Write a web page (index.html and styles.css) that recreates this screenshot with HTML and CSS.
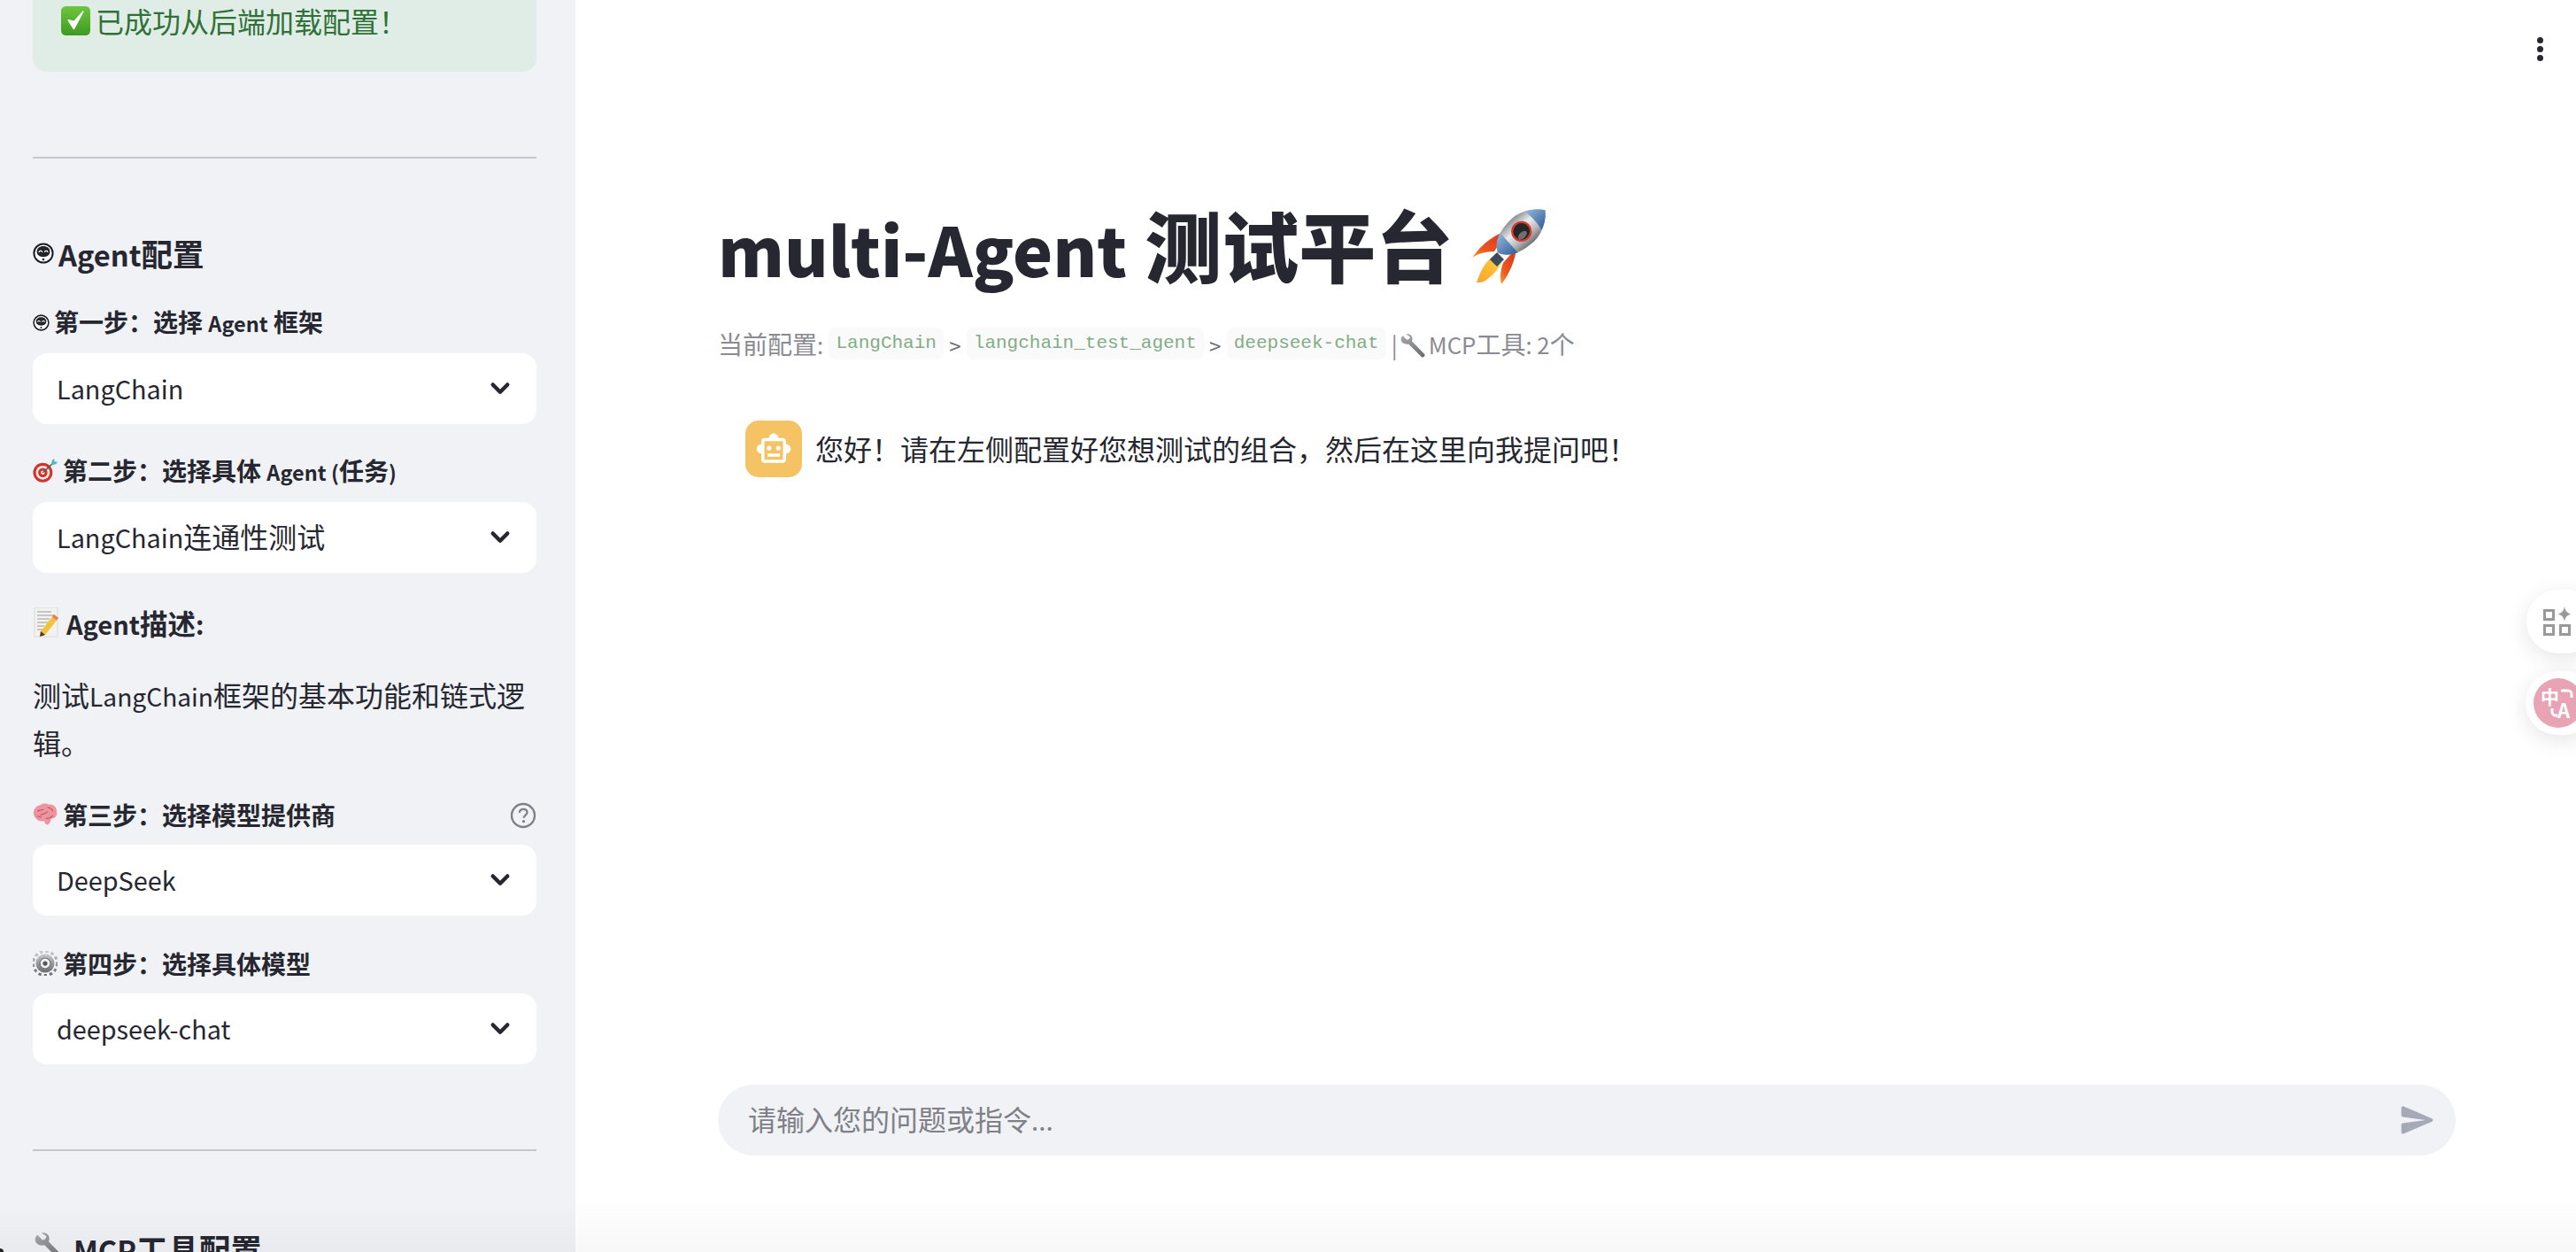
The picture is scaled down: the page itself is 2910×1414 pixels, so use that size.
FILE: index.html
```html
<!DOCTYPE html>
<html lang="zh">
<head>
<meta charset="utf-8">
<title>multi-Agent 测试平台</title>
<link rel="stylesheet" href="styles.css">
</head>
<body>
<svg class="defs" width="0" height="0" aria-hidden="true">
  <defs>
    <linearGradient id="gCheck" x1="0" y1="0" x2="0" y2="1"><stop offset="0" stop-color="#6fc63f"/><stop offset="1" stop-color="#3d9a22"/></linearGradient>
    <linearGradient id="gBody" x1="0" y1="0" x2="0" y2="1"><stop offset="0" stop-color="#8d8f91"/><stop offset=".38" stop-color="#eceded"/><stop offset=".7" stop-color="#b9bbbc"/><stop offset="1" stop-color="#6f7173"/></linearGradient>
    <linearGradient id="gBlue" x1="0" y1="0" x2="0" y2="1"><stop offset="0" stop-color="#8fb4dc"/><stop offset="1" stop-color="#35619c"/></linearGradient>
    <linearGradient id="gFlame" x1="1" y1="0" x2="0" y2="1"><stop offset="0" stop-color="#ffd24a"/><stop offset=".6" stop-color="#ffb52e"/><stop offset="1" stop-color="#f2a23c"/></linearGradient>
    <linearGradient id="gFin" x1="1" y1="0" x2="0" y2="1"><stop offset="0" stop-color="#d92e1d"/><stop offset=".7" stop-color="#ec5a20"/><stop offset="1" stop-color="#f8a635"/></linearGradient>
    <linearGradient id="gGear" x1="0" y1="0" x2="0" y2="1"><stop offset="0" stop-color="#c8c9cb"/><stop offset="1" stop-color="#6b6d70"/></linearGradient>
    <linearGradient id="gWrench" x1="0" y1="0" x2="1" y2="1"><stop offset="0" stop-color="#a9abae"/><stop offset="1" stop-color="#686a6e"/></linearGradient>
    <symbol id="iFace" viewBox="0 0 24 24">
      <circle cx="12" cy="12" r="10.6" fill="#fff" stroke="#1d1e24" stroke-width="2"/>
      <path d="M4.6 10.2C4.6 6.2 8 4 12 4s7.400 2.200 7.400 6.200c0 3.600-3 5.800-7.400 5.800s-7.400-2.200-7.400-5.800z" fill="#24252c"/>
      <path d="M7 11c.3-2.600 3.300-2.600 3.600 0M13.400 11c.3-2.600 3.300-2.600 3.600 0" fill="none" stroke="#fff" stroke-width="1.300"/>
      <circle cx="12" cy="19" r="1.300" fill="#24252c"/>
    </symbol>
    <symbol id="iWrench" viewBox="0 0 32 32">
      <path d="M3 2.500l5 5 3-1 1-3-5-3C11 -.5 15 2 14.800 6.500c0 1-.3 1.800-.6 2.500L30 25.500c1.600 1.800-1.800 5.200-3.600 3.500L10 12.600c-3.600 1.200-8.800-.6-9.300-5.100-.2-2 .6-3.800 2.300-5z" fill="url(#gWrench)"/>
    </symbol>
  </defs>
</svg>

<div class="app">
  <aside class="sidebar">
    <div class="alert">
      <svg class="emoji e-check" viewBox="0 0 24 24"><rect x="0" y="0" width="24" height="24" rx="4" fill="url(#gCheck)"/><path d="M6 11.500l4.500 7L18 4.500l-7.300 8.300z" fill="#fff" stroke="#fff" stroke-width="1.200" stroke-linejoin="round"/></svg>
      <span>已成功从后端加载配置！</span>
    </div>
    <hr class="rule rule-first">

    <h3 class="side-head"><svg class="emoji e-face-l"><use href="#iFace"/></svg><span><span class="lt">Agent</span>配置</span></h3>

    <div class="label label-first"><svg class="emoji e-face-s"><use href="#iFace"/></svg><span>第一步：选择 <span class="lt">Agent</span> 框架</span></div>
    <div class="select"><span class="val"><span class="lt">LangChain</span></span><svg class="chev" viewBox="0 0 24 24"><path d="M6.500 9l5.500 5.500L17.500 9"/></svg></div>

    <div class="label label-second"><svg class="emoji e-lab" viewBox="0 0 32 32"><circle cx="13" cy="18" r="12.500" fill="#d5322c"/><circle cx="13" cy="18" r="9" fill="#f3ece6"/><circle cx="13" cy="18" r="6" fill="#d5322c"/><circle cx="13" cy="18" r="2.600" fill="#f3ece6"/><path d="M13 18L27 5" stroke="#555" stroke-width="1.600"/><path d="M24 7l1-5 3-2 0 4 4 0-2 3-5 1z" fill="#4fb6c4"/></svg><span>第二步：选择具体 <span class="lt">Agent (</span>任务<span class="lt">)</span></span></div>
    <div class="select"><span class="val"><span class="lt">LangChain</span>连通性测试</span><svg class="chev" viewBox="0 0 24 24"><path d="M6.500 9l5.500 5.500L17.500 9"/></svg></div>

    <p class="desc-head"><svg class="emoji e-memo" viewBox="0 0 30 34"><rect x="2" y="0" width="26" height="33" fill="#f2f2ef" stroke="#d5d5d2" stroke-width=".8"/><path d="M5 5h16M5 9h19M5 13h14M5 17h12M5 21h8M5 25h6" stroke="#9a9a9a" stroke-width="1.100"/><path d="M24 8l5 4-15 19-6 2 1-6z" fill="#f3c23c"/><path d="M24 8l5 4-2 2.500-5-4z" fill="#e7795f"/><path d="M9 27l5 4-6 2z" fill="#4a3c2c"/></svg><span><span class="lt">Agent</span>描述<span class="lt">:</span></span></p>
    <p class="desc">测试<span class="lt">LangChain</span>框架的基本功能和链式逻辑。</p>

    <div class="label label-help"><svg class="emoji e-lab" viewBox="0 0 32 30"><path d="M2 17C-1 11 3 4 9 3c3-3 9-3 12-1 5-1 10 3 10 9 1 5-2 9-7 9-1 3-2 7-5 8-3 0-3-3-5-5-5 2-9-1-12-6z" fill="#ee93a0"/><path d="M6 11c3-3 6-1 8-3M10 16c3-3 8-2 9-5M19 6c3 0 6 2 7 5M17 20c3 0 7-1 9-4M6 17c2 1 3 1 5 1" fill="none" stroke="#bf5c6e" stroke-width="1.500"/></svg><span>第三步：选择模型提供商</span>
      <svg class="help" viewBox="0 0 30 30"><circle cx="15" cy="15" r="13" fill="none" stroke="#7f8187" stroke-width="2.400"/><path d="M10.800 11.800c.3-2.600 2.200-3.900 4.400-3.900 2.500 0 4.300 1.500 4.300 3.700 0 3-3.700 3-3.900 6.200" fill="none" stroke="#7f8187" stroke-width="2.300"/><circle cx="15.500" cy="21.700" r="1.600" fill="#7f8187"/></svg>
    </div>
    <div class="select"><span class="val"><span class="lt">DeepSeek</span></span><svg class="chev" viewBox="0 0 24 24"><path d="M6.500 9l5.500 5.500L17.500 9"/></svg></div>

    <div class="label label-fourth"><svg class="emoji e-lab" viewBox="0 0 32 32"><circle cx="16" cy="16" r="15.500" fill="none" stroke="url(#gGear)" stroke-width="3.500" stroke-dasharray="3.800 3.500"/><circle cx="16" cy="16" r="12" fill="url(#gGear)"/><circle cx="16" cy="16" r="6.800" fill="#f2f2f2" stroke="#6b6d70" stroke-width="1.200"/><circle cx="16" cy="16" r="3" fill="#55575b"/></svg><span>第四步：选择具体模型</span></div>
    <div class="select"><span class="val"><span class="lt">deepseek-chat</span></span><svg class="chev" viewBox="0 0 24 24"><path d="M6.500 9l5.500 5.500L17.500 9"/></svg></div>

    <hr class="rule rule-second">
    <h3 class="side-head side-head-mcp"><svg class="emoji e-wrench-l"><use href="#iWrench"/></svg><span><span class="lt">MCP</span>工具配置</span></h3>
  </aside>

  <main class="main">
    <h1 class="title"><span><span class="lt">multi-Agent</span> 测试平台</span>
      <svg class="rocket" viewBox="20 15 92 88">
        <path d="M62 41C50 43 33 55 22 71c6-4 14-7 25-7z" fill="url(#gFin)"/>
        <path d="M72 60c-1 13-8 30-17 41-2-8-1-16 2-24z" fill="url(#gFin)"/>
        <path d="M47 69c-6 2-14 12-20 30 4 0 7 0 10-2 8-6 15-13 18-20z" fill="url(#gFlame)"/>
        <path d="M50 65l-8 8 8 8 8-8z" fill="#3c4b5c"/>
        <g transform="rotate(-42 77 42)">
          <path d="M42 42c5-11 18-18 38-18 14 0 27 9 34 18-7 9-20 18-34 18-20 0-33-7-38-18z" fill="url(#gBody)"/>
          <path d="M42 42c3-7 9-12 17-15v30c-8-3-14-8-17-15z" fill="url(#gBlue)"/>
          <path d="M96 28c8 3 14 8 18 14-4 6-10 11-18 14 2-9 2-19 0-28z" fill="url(#gBlue)"/>
          <circle cx="78" cy="42" r="10.500" fill="#262628" stroke="#d33a30" stroke-width="2.400"/>
          <ellipse cx="76" cy="46" rx="6" ry="3.500" fill="#6d7072"/>
        </g>
      </svg>
    </h1>
    <p class="caption">当前配置<span class="lt">:</span> <code>LangChain</code> <b>&gt;</b> <code>langchain_test_agent</code> <b>&gt;</b> <code>deepseek-chat</code> <span class="lt">|</span><svg class="emoji e-wrench-s"><use href="#iWrench"/></svg><span class="lt">MCP</span>工具<span class="lt">: 2</span>个</p>

    <div class="message">
      <div class="avatar">
        <svg viewBox="0 0 24 24"><path d="M20 9V7c0-1.100-.9-2-2-2h-3c0-1.660-1.340-3-3-3S9 3.340 9 5H6c-1.100 0-2 .9-2 2v2c-1.660 0-3 1.340-3 3s1.340 3 3 3v4c0 1.100.9 2 2 2h12c1.100 0 2-.9 2-2v-4c1.660 0 3-1.340 3-3s-1.340-3-3-3zm-2 10H6V7h12v12zm-9-6c-.83 0-1.500-.67-1.500-1.500S8.170 10 9 10s1.500.67 1.500 1.500S9.830 13 9 13zm7.500-1.500c0 .83-.67 1.500-1.500 1.500s-1.500-.67-1.500-1.500S14.170 10 15 10s1.500.67 1.500 1.500zM8 15h8v2H8v-2z"/></svg>
      </div>
      <p>您好！请在左侧配置好您想测试的组合，然后在这里向我提问吧！</p>
    </div>

    <div class="chat-input">
      <span>请输入您的问题或指令<span class="lt">...</span></span>
      <svg class="send" viewBox="0 0 24 24"><path d="M3.400 20.400l17.450-7.480c.81-.35.81-1.490 0-1.840L3.400 3.600c-.66-.29-1.390.2-1.390.91L2 9.120c0 .5.37.93.87.99L17 12 2.870 13.880c-.5.07-.87.5-.87 1l.01 4.610c0 .71.73 1.200 1.390.91z"/></svg>
    </div>
  </main>

  <div class="kebab"><i></i><i></i><i></i></div>

  <div class="float float-tools">
    <svg viewBox="0 0 36 36"><g fill="none" stroke="#999" stroke-width="3"><rect x="2.500" y="5.500" width="10" height="10"/><rect x="2.500" y="22.500" width="10" height="10"/><rect x="20.500" y="22.500" width="10" height="10"/></g><path d="M25 1c1 5 2.500 7 7.500 8.500-5 1.500-6.500 3.500-7.500 8.500-1-5-2.500-7-7.500-8.500C22.500 8 24 6 25 1z" fill="#999"/></svg>
  </div>
  <div class="float float-translate">
    <div class="pink">
      <svg viewBox="0 0 56 56">
        <text x="8" y="29" class="t-zh">中</text>
        <text x="27" y="45" class="t-en">A</text>
        <path d="M31 14h8a4 4 0 0 1 4 4v4M21 34v4a4 4 0 0 0 4 4h2" fill="none" stroke="#fff" stroke-width="3"/>
      </svg>
    </div>
  </div>
  <div class="bottom-fade"></div>
  <div class="corner"></div>
</div>
</body>
</html>
```

FILE: styles.css
```css
* { box-sizing: border-box; }
html, body { margin: 0; height: 100%; overflow: hidden; background: #fff; }
body { font-family: "Noto Sans CJK SC", "Noto Sans", sans-serif; color: #262730; }
.defs { position: absolute; }
.lt { font-size: .92em; }

.app { position: relative; display: flex; height: 1414px; overflow: hidden; }

/* Sidebar */
.sidebar { flex: 0 0 650px; height: 1414px; padding: 0 44px 0 37px; background: #f0f2f6; overflow: hidden; }
.alert { display: flex; align-items: center; gap: 6px; height: 81px; padding: 0 30px 35px 32px; background: #e0ece6; border-radius: 0 0 15px 15px; color: #2f7136; font-size: 32px; line-height: 48px; }
.rule { height: 2px; margin: 0; border: 0; background: #c6c7cc; }
.rule-first { margin-top: 96px; }
.rule-second { margin-top: 96px; }
.side-head { display: flex; align-items: center; margin: 82px 0 0; height: 50px; font-size: 35.5px; line-height: 50px; font-weight: 700; }
.side-head-mcp { margin-top: 85px; }
.label { display: flex; align-items: center; height: 36px; margin: 36px 0 17px; font-size: 28px; line-height: 36px; font-weight: 700; }
.label .lt { font-size: .84em; }
.label-first { margin-top: 35px; }
.label-second { margin-top: 35px; }
.label-help { position: relative; margin-top: 38px; margin-bottom: 16px; }
.label-fourth { margin-bottom: 16px; }
.select { display: flex; align-items: center; justify-content: space-between; height: 80px; padding: 0 23px 0 27px; background: #fff; border-radius: 16px; font-size: 32px; }
.select .lt { font-size: .9em; }
.val { display: block; margin-top: -4px; }
.chev { width: 36px; height: 36px; fill: none; stroke: #262730; stroke-width: 3; stroke-linecap: round; stroke-linejoin: round; }
.desc-head { display: flex; align-items: center; margin: 34px 0 0; height: 44px; font-size: 31.5px; line-height: 44px; font-weight: 700; }
.desc { margin: 33px 0 0; font-size: 32px; line-height: 52px; }
.desc .lt { font-size: .88em; }
.help { width: 30px; height: 30px; margin: 2px 0 0 auto; }

/* Emoji drawings */
.emoji { flex: none; display: inline-block; }
.e-check { width: 33px; height: 33px; }
.e-face-l { width: 24px; height: 24px; margin-right: 5px; }
.e-face-s { width: 19px; height: 19px; margin-right: 5px; }
.e-lab { width: 28px; height: 28px; margin-right: 6px; }
.e-memo { width: 30px; height: 34px; margin-right: 8px; }
.e-wrench-l { width: 36px; height: 36px; margin: 0 8px 0 2px; }
.e-wrench-s { width: 29px; height: 29px; vertical-align: -6px; margin: 0 3px 0 3px; }

/* Main */
.main { flex: 1; display: flex; flex-direction: column; min-width: 0; height: 1414px; padding: 222px 136px 109px 161px; }
.title { display: flex; align-items: center; gap: 20px; margin: 0; height: 110px; font-size: 87px; line-height: 110px; font-weight: 900; white-space: nowrap; }
.title .lt { font-size: .875em; }
.rocket { width: 92px; height: 88px; flex: none; margin-top: 4px; }
.caption { margin: 38px 0 0; height: 36px; font-size: 28px; line-height: 36px; color: #8a8b92; white-space: nowrap; }
.caption code { display: inline-block; height: 36px; padding: 0 8px; background: #fafafa; border-radius: 8px; color: #7fae85; font-family: "Liberation Mono", monospace; font-size: 21px; line-height: 36px; vertical-align: top; }
.caption b { font-weight: 400; color: #6d6e75; font-size: 24px; }
.message { display: flex; align-items: center; gap: 15px; margin: 69px 0 0 31px; }
.avatar { flex: none; display: flex; align-items: center; justify-content: center; width: 64px; height: 64px; border-radius: 15px; background: #f5c264; }
.avatar svg { width: 42px; height: 42px; fill: #fff; }
.message p { margin: -2px 0 0; font-size: 32px; line-height: 48px; }
.chat-input { display: flex; align-items: center; justify-content: space-between; height: 80px; margin-top: auto; padding: 0 21px 0 34px; border-radius: 40px; background: #f0f2f6; color: #808088; font-size: 32px; }
.chat-input > span { margin-top: -5px; }
.send { width: 44px; height: 44px; fill: #a6a9b8; }

/* Overlays */
.kebab { position: absolute; top: 42px; left: 2866px; display: flex; flex-direction: column; gap: 3px; }
.kebab i { display: block; width: 7px; height: 7px; border-radius: 50%; background: #262730; }
.float { position: absolute; display: flex; align-items: center; background: #fff; box-shadow: 0 6px 24px rgba(0, 0, 0, .1); }
.float-tools { left: 2854px; top: 666px; width: 80px; height: 72px; padding-left: 18px; border-radius: 36px; }
.float-tools svg { width: 36px; height: 36px; }
.float-translate { left: 2853px; top: 758px; width: 80px; height: 72px; padding-left: 9px; border-radius: 36px; }
.pink { width: 56px; height: 56px; border-radius: 50%; background: #e8a3b5; }
.pink svg { display: block; width: 56px; height: 56px; }
.t-zh { fill: #fff; font-size: 21px; font-weight: 700; }
.t-en { fill: #fff; font-size: 22px; font-weight: 700; }
.bottom-fade { position: absolute; left: 0; right: 0; bottom: 0; height: 60px; background: linear-gradient(to bottom, rgba(0, 0, 0, 0), rgba(0, 0, 0, .03)); pointer-events: none; }
.corner { position: absolute; left: 0; bottom: 0; width: 4px; height: 4px; background: #222; border-top-right-radius: 4px; }
```
